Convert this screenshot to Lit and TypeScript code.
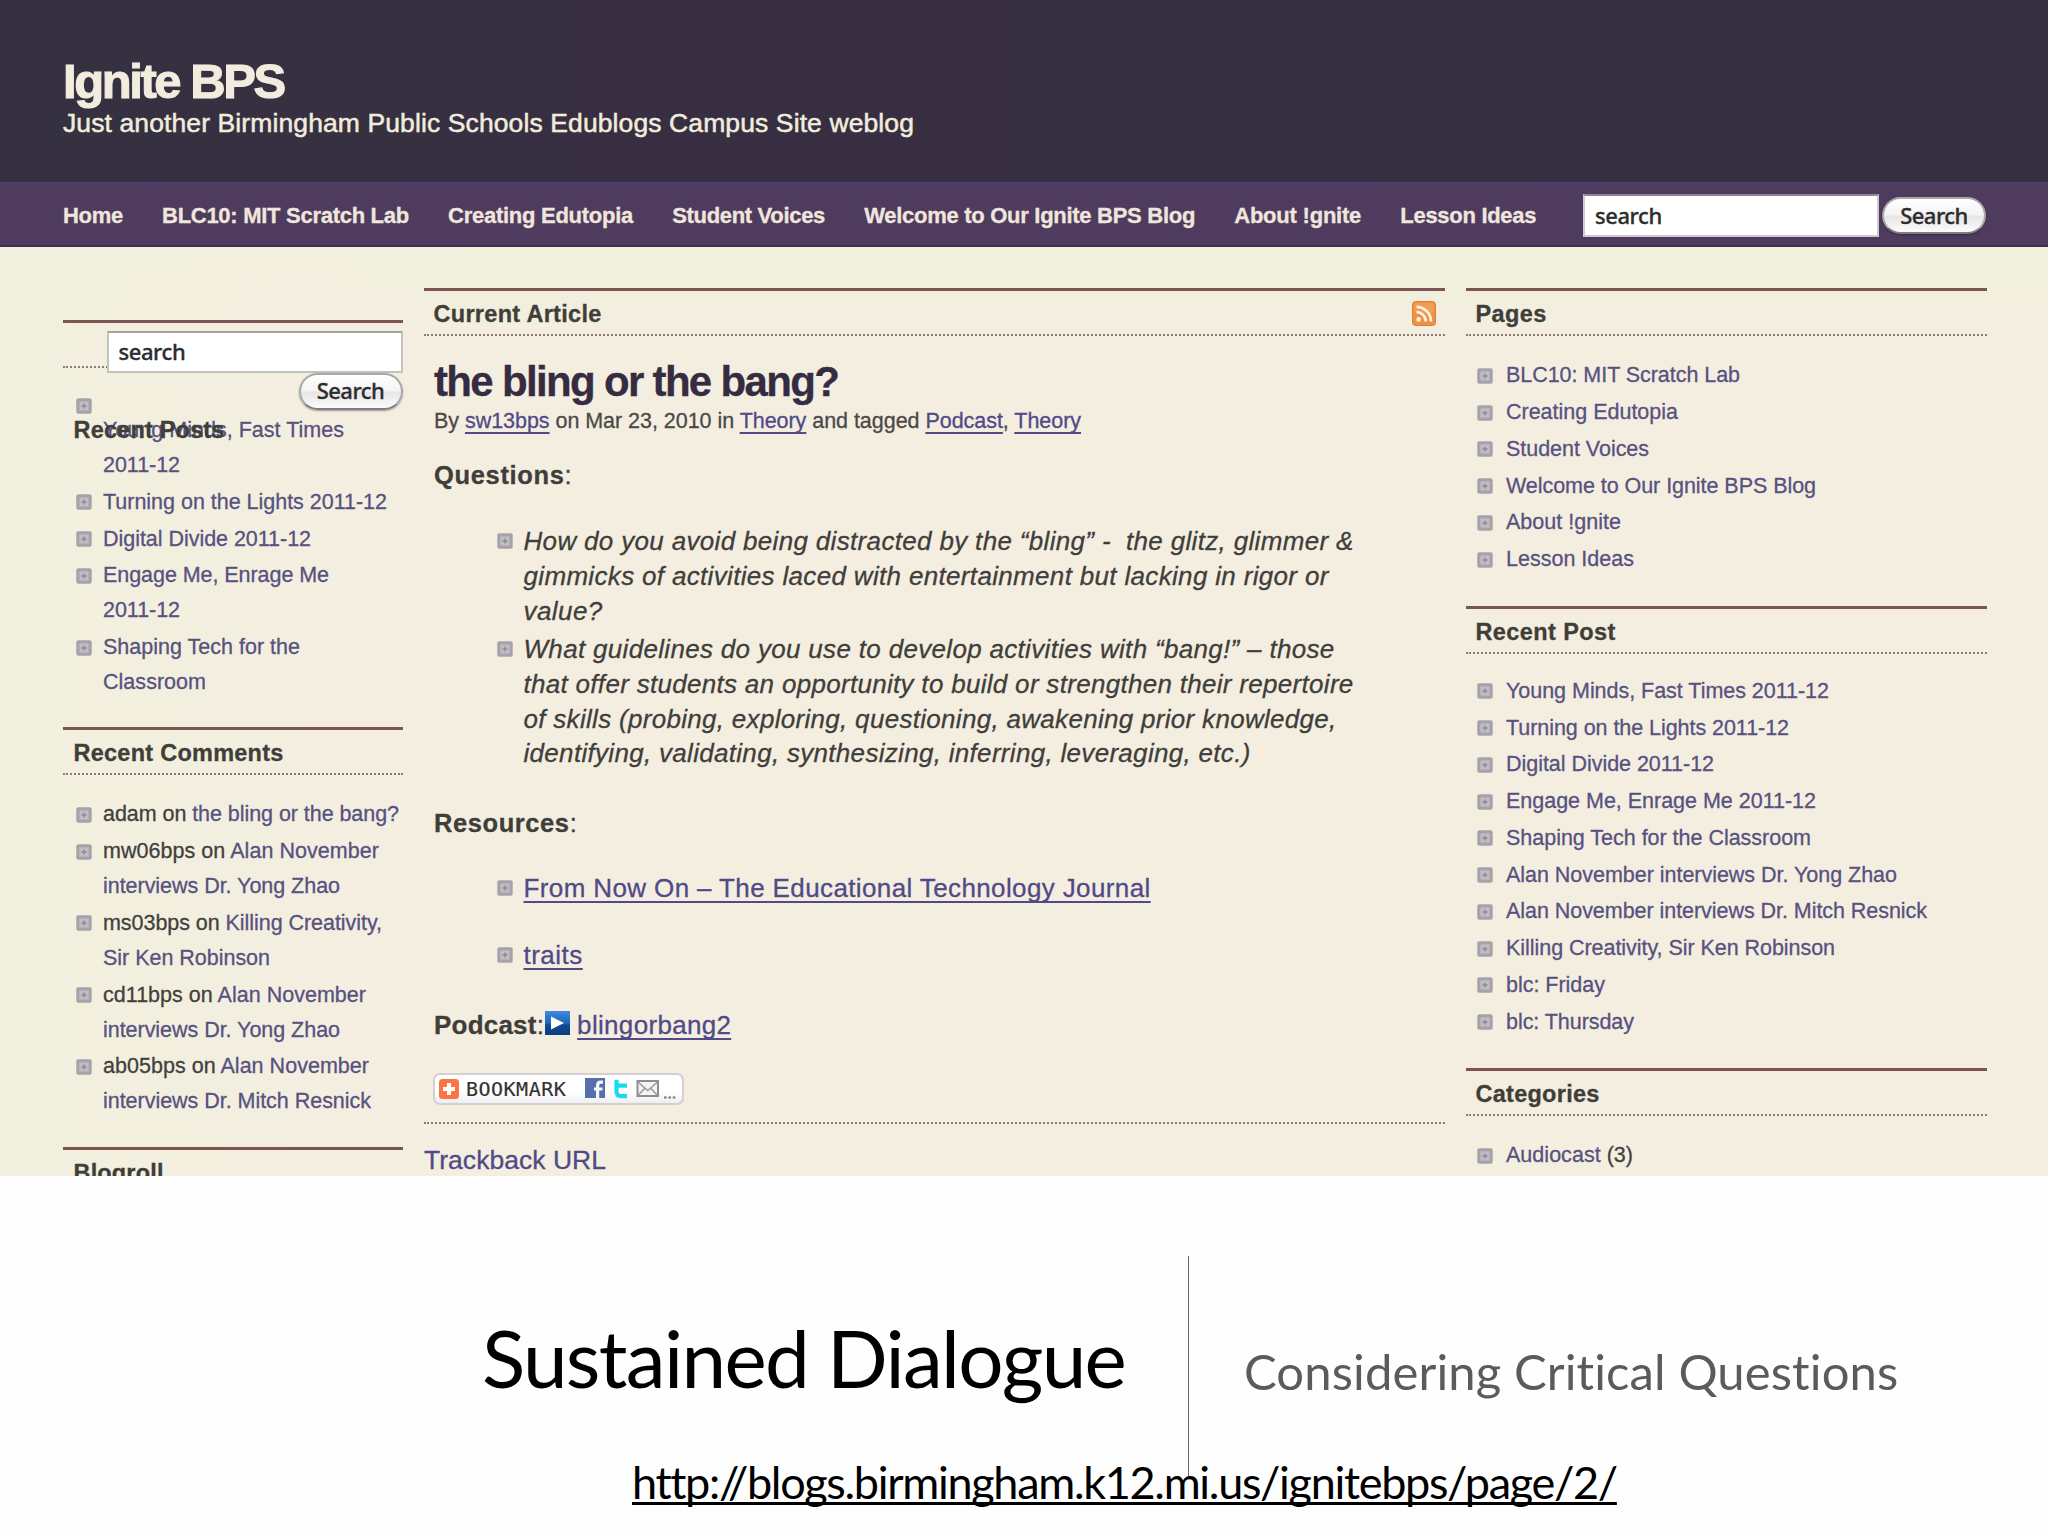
import { LitElement, html, css, svg, nothing } from "lit";
import { customElement, property } from "lit/decorators.js";

/** One line of text whose tracking is adjusted so that it spans a given width. */
@customElement("text-line")
class TextLine extends LitElement {
  @property({ type: Number }) span = 0;

  static styles = css`
    :host { display: block; white-space: nowrap; }
    .ink { display: inline-block; vertical-align: top; line-height: inherit; }
  `;

  firstUpdated() {
    const ink = this.renderRoot.querySelector(".ink") as HTMLElement;
    const count = (this.textContent ?? "").trim().length;
    if (!this.span || count < 2) return;
    const natural = ink.getBoundingClientRect().width;
    const tracking = (this.span + 1 - natural) / (count - 0.5);
    this.style.letterSpacing = `${tracking.toFixed(3)}px`;
  }

  render() {
    return html`<span class="ink"><slot></slot></span>`;
  }
}

@customElement("plus-bullet")
class PlusBullet extends LitElement {
  static styles = css`
    :host { display: block; width: 16px; height: 16px; }
    svg { display: block; }
  `;
  render() {
    return html`<svg width="16" height="16" viewBox="0 0 16 16">
      <rect x="0.3" y="0.3" width="15.4" height="15.4" rx="2" fill="#a5a2aa" />
      <rect x="3.4" y="3.4" width="9.2" height="9.2" fill="#c0bdc4" />
      <path d="M8 5.4v5.2M5.4 8h5.2" stroke="#8f8b98" stroke-width="1.5" />
    </svg>`;
  }
}

/** A run of text on one line: plain prefix, link, plain suffix, and its width. */
type Line = { pre?: string; link?: string; post?: string; w: number };
type Item = Line[];

const l = (link: string, w: number): Line => ({ link, w });

const nav: [string, number][] = [
  ["Home", 59], ["BLC10: MIT Scratch Lab", 246], ["Creating Edutopia", 184],
  ["Student Voices", 152], ["Welcome to Our Ignite BPS Blog", 330],
  ["About !gnite", 126], ["Lesson Ideas", 135],
];

const recentPosts: Item[] = [
  [l("Young Minds, Fast Times", 240), l("2011-12", 76)],
  [l("Turning on the Lights 2011-12", 283)],
  [l("Digital Divide 2011-12", 207)],
  [l("Engage Me, Enrage Me", 225), l("2011-12", 76)],
  [l("Shaping Tech for the", 196), l("Classroom", 102)],
];

const comments: Item[] = [
  [{ pre: "adam on ", link: "the bling or the bang?", w: 295 }],
  [{ pre: "mw06bps on ", link: "Alan November", w: 275 }, l("interviews Dr. Yong Zhao", 236)],
  [{ pre: "ms03bps on ", link: "Killing Creativity,", w: 278 }, l("Sir Ken Robinson", 166)],
  [{ pre: "cd11bps on ", link: "Alan November", w: 262 }, l("interviews Dr. Yong Zhao", 236)],
  [{ pre: "ab05bps on ", link: "Alan November", w: 265 }, l("interviews Dr. Mitch Resnick", 267)],
];

const pages: Item[] = [
  [l("BLC10: MIT Scratch Lab", 233)], [l("Creating Edutopia", 171)],
  [l("Student Voices", 142)], [l("Welcome to Our Ignite BPS Blog", 309)],
  [l("About !gnite", 114)], [l("Lesson Ideas", 127)],
];

const recentPost: Item[] = [
  [l("Young Minds, Fast Times 2011-12", 322)], [l("Turning on the Lights 2011-12", 282)],
  [l("Digital Divide 2011-12", 207)], [l("Engage Me, Enrage Me 2011-12", 309)],
  [l("Shaping Tech for the Classroom", 304)], [l("Alan November interviews Dr. Yong Zhao", 390)],
  [l("Alan November interviews Dr. Mitch Resnick", 420)], [l("Killing Creativity, Sir Ken Robinson", 328)],
  [l("blc: Friday", 98)], [l("blc: Thursday", 127)],
];

const questions: [string, number][][] = [
  [
    ["How do you avoid being distracted by the “bling” - \u00a0the glitz, glimmer &", 829],
    ["gimmicks of activities laced with entertainment but lacking in rigor or", 804],
    ["value?", 78],
  ],
  [
    ["What guidelines do you use to develop activities with “bang!” – those", 810],
    ["that offer students an opportunity to build or strengthen their repertoire", 829],
    ["of skills (probing, exploring, questioning, awakening prior knowledge,", 812],
    ["identifying, validating, synthesizing, inferring, leveraging, etc.)", 726],
  ],
];

const rssIcon = svg`<svg class="rss" width="24" height="25" viewBox="0 0 24 25">
  <rect x="0.5" y="0.5" width="23" height="24" rx="3" fill="#ee9145" stroke="#e07f35" />
  <rect x="2" y="2" width="20" height="10" rx="2" fill="#f4a55c" opacity="0.6" />
  <circle cx="6.6" cy="18.4" r="2.3" fill="#fbf0e2" />
  <path d="M4.5 11.2a9 9 0 0 1 9.2 9.3M4.5 5.8A14.6 14.6 0 0 1 19 20.5" fill="none" stroke="#fbf0e2" stroke-width="2.8" />
</svg>`;

const playIcon = svg`<svg width="25" height="24" viewBox="0 0 25 24">
  <defs><linearGradient id="play" x1="0" y1="0" x2="0" y2="1">
    <stop offset="0" stop-color="#3f8ae0" /><stop offset="0.5" stop-color="#1f65b8" />
    <stop offset="0.6" stop-color="#0c4a94" /><stop offset="1" stop-color="#0a3f80" />
  </linearGradient></defs>
  <rect width="25" height="24" fill="url(#play)" />
  <path d="M6 5.5v13L19 12z" fill="#fff" />
</svg>`;

const bookmarkPlus = svg`<svg width="20" height="20" viewBox="0 0 20 20">
  <rect width="20" height="20" rx="3.5" fill="#fb7446" />
  <path d="M10 4v12M4 10h12" stroke="#fff" stroke-width="4" />
</svg>`;

const bookmarkIcons = svg`<svg width="92" height="24" viewBox="0 0 92 24">
  <rect x="0" y="1" width="20" height="20" fill="#5470ad" />
  <path d="M18 5.2h-2.2q-3.2 0-3.2 3.4V21M9 12h8.5" fill="none" stroke="#f4f6fb" stroke-width="3.2" />
  <path d="M31.5 3v11.5q0 4.6 4.8 4.6H42M31.5 8.6H42" fill="none" stroke="#19dbf0" stroke-width="4.2" />
  <rect x="52.5" y="4" width="20.5" height="15" fill="#f4f4f4" stroke="#8e8e8e" stroke-width="2" />
  <path d="M53 5l9.8 8.5L72.5 5M53 18.5l6.5-7M72.5 18.5l-6.5-7" fill="none" stroke="#999" stroke-width="1.5" />
  <path d="M79 20.5h2.6M83.4 20.5h2.6M87.8 20.5h2.6" stroke="#777" stroke-width="2.2" />
</svg>`;

@customElement("app-root")
class AppRoot extends LitElement {
  static styles = css`
    :host {
      display: block; width: 2048px; height: 1536px; overflow: hidden; background: #fefefe;
      font-family: "Liberation Sans", Arial, sans-serif; color: #42403d;
    }
    * { box-sizing: border-box; }
    ul { list-style: none; margin: 0; padding: 0; }
    .blog {
      height: 1176px; overflow: hidden; -webkit-text-stroke-width: 0.3px;
      background: linear-gradient(90deg, #f2f0de 0, rgba(243, 239, 224, 0.6) 300px, rgba(244, 238, 225, 0) 520px),
        linear-gradient(180deg, #f1f0dd 245px, #f4eee1 350px, #f4eee1 1100px, #f3efe0 1176px);
    }
    .masthead { height: 182px; padding: 54px 63px 0; background: linear-gradient(90deg, #353141, #372f41 30%, #362f40); color: #f2ecdf; }
    .site { font-size: 49px; line-height: 54px; font-weight: 700; -webkit-text-stroke-width: 1.1px; }
    .tagline { font-size: 26.5px; line-height: 30px; -webkit-text-stroke-width: 0.5px; }
    .navbar {
      height: 65px; border-top: 3px solid #494070; border-bottom: 2px solid #412d52; background: #4f3b5e;
      display: flex; align-items: center; justify-content: space-between; padding: 1px 62px 0 63px;
    }
    .nav { display: flex; gap: 39.2px; font-size: 22px; line-height: 30px; font-weight: 700; color: #efe6dd; }
    .find { display: flex; align-items: center; gap: 3px; font-family: "Noto Sans", "Open Sans", sans-serif; font-size: 22px; font-weight: 500; color: #2d2d2d; }
    .field { width: 296px; height: 43px; background: #fff; border: 2px solid #cfcad2; border-top-color: #8d8598; padding: 0 10px; line-height: 39px; }
    .btn {
      width: 104px; height: 37px; border-radius: 19px; display: flex; justify-content: center; line-height: 33px;
      background: linear-gradient(#fff, #f4f4f4 48%, #e6e6e8 52%, #fbfbfb); border: 2px solid #aaa7ab; border-bottom-color: #7f7c80; box-shadow: 0 1px 2px rgba(0, 0, 0, 0.35);
    }
    .columns { display: grid; grid-template-columns: 340px 1021px 521px; column-gap: 21px; padding: 41px 61px 0 63px; align-items: start; }
    .left { padding-top: 31.5px; }
    .panel { position: relative; border-top: 3px solid #7d5550; }
    .panel-head {
      height: 45px; border-bottom: 2px dotted #8e7a70; padding: 0 9.5px; display: flex; justify-content: space-between;
      font-size: 23.5px; line-height: 46px; font-weight: 700; color: #3f3e39;
    }
    .left .panel-head { padding-left: 10.5px; }
    .rss { margin-top: 10px; }
    .list { padding: 22px 0 25.5px; font-size: 21.5px; line-height: 35px; }
    .list.wide { padding: 22.3px 0 26.8px; }
    .list.tight { padding-top: 20.3px; }
    .list.pushed { padding-top: 45.5px; }
    .item { display: flex; gap: 13.5px; padding-left: 10.5px; margin-bottom: 1.75px; }
    .left .item { gap: 11px; padding-left: 13px; }
    .item plus-bullet { margin-top: 9.5px; }
    .raised plus-bullet { margin-top: -15px; }
    .link { color: #57527f; }
    .quick { position: absolute; top: 8px; right: 0.5px; display: flex; flex-direction: column; align-items: flex-end; gap: 0; }
    .quick .field { height: 42px; border-color: #c4c2bd; border-top-color: #a5a39f; line-height: 37px; }
    .quick .btn { line-height: 31px; }
    .overlap { position: absolute; left: 10.5px; top: 85px; font-size: 23.5px; line-height: 45px; font-weight: 700; color: #3f3e39; }
    .article { padding-left: 10px; font-size: 26px; line-height: 34.8px; color: #3f3e3a; }
    .title { margin-top: 22px; font-size: 42px; line-height: 48px; font-weight: 700; color: #352c42; }
    .byline { font-size: 21.5px; line-height: 30px; color: #4b4947; }
    .u { color: #504a86; text-decoration: underline; text-decoration-thickness: 2px; text-underline-offset: 4px; text-decoration-skip-ink: none; }
    .q { margin-top: 22px; font-size: 25.5px; }
    .questions { margin-top: 31.2px; font-style: italic; }
    .point { display: flex; gap: 11px; padding-left: 62.5px; margin-bottom: 3.6px; }
    .point plus-bullet { margin-top: 9px; }
    .r { margin-top: 34.5px; font-size: 25.5px; }
    .res1 { margin: 30.2px 0 0; }
    .res2 { margin: 33px 0 0; }
    .pod { margin-top: 34.5px; display: flex; }
    .pod svg { margin: 3px 7px 0 1px; }
    .bookmark {
      margin: 30px 0 0 -1px; width: 251px; height: 32px; border: 2px solid #d3d0d3; border-radius: 7px;
      background: linear-gradient(#fff 60%, #efeff2); display: flex; align-items: center; padding-left: 4px; color: #333;
    }
    .bookmark text-line { margin-left: 7px; width: 119px; font-family: "DejaVu Sans Mono", monospace; font-size: 20px; line-height: 30px; -webkit-text-stroke-width: 0.2px; }
    .bookmark svg { flex: none; }
    .rule { margin-top: 17.5px; border-top: 2px dotted #8e7a70; }
    .trackback { margin-top: 18px; font-size: 26.5px; line-height: 36px; color: #504a86; }
    .caption { height: 360px; padding-top: 80px; font-family: Lato, "Gill Sans", sans-serif; }
    .captions { display: flex; height: 220px; padding-left: 482px; }
    .headline { width: 706px; font-size: 80px; line-height: 96px; padding-top: 53px; color: #000; }
    .sub { border-left: 1px solid #6c6c6c; padding: 84px 0 0 55px; font-size: 49px; line-height: 62px; color: #5b5a5e; }
    .url { position: relative; margin: -22.5px 0 0 632px; font-size: 45px; line-height: 56px; color: #000; }
    .url-text { text-decoration: underline; text-decoration-thickness: 3px; text-underline-offset: 3px; text-decoration-skip-ink: none; }
  `;

  private list(items: Item[], kind = "", firstRaised = false) {
    return html`<ul class="list ${kind}">
      ${items.map((lines, i) => html`<li class="item ${firstRaised && i === 0 ? "raised" : ""}">
        <plus-bullet></plus-bullet>
        <div>${lines.map((x) => html`<text-line .span=${x.w}>${x.pre ?? nothing}<span class="link">${x.link}</span>${x.post ?? nothing}</text-line>`)}</div>
      </li>`)}
    </ul>`;
  }

  private head(text: string, w: number, extra: unknown = nothing) {
    return html`<div class="panel-head"><text-line .span=${w}>${text}</text-line>${extra}</div>`;
  }

  private search() {
    return html`<div class="field"><text-line .span=${66}>search</text-line></div>
      <div class="btn"><text-line .span=${67}>Search</text-line></div>`;
  }

  render() {
    return html`
      <div class="blog">
        <header class="masthead">
          <text-line class="site" .span=${221}>Ignite BPS</text-line>
          <text-line class="tagline" .span=${850}>Just another Birmingham Public Schools Edublogs Campus Site weblog</text-line>
        </header>
        <div class="navbar">
          <nav class="nav">${nav.map(([t, w]) => html`<text-line .span=${w}>${t}</text-line>`)}</nav>
          <div class="find">${this.search()}</div>
        </div>
        <div class="columns">
          <aside class="left">
            <section class="panel">
              <div class="panel-head"></div>
              ${this.list(recentPosts, "pushed", true)}
              <text-line class="overlap" .span=${150}>Recent Posts</text-line>
              <div class="find quick">${this.search()}</div>
            </section>
            <section class="panel">${this.head("Recent Comments", 209)}${this.list(comments)}</section>
            <section class="panel">${this.head("Blogroll", 89)}</section>
          </aside>
          <main>
            <section class="panel">${this.head("Current Article", 167, rssIcon)}</section>
            <article class="article">
              <text-line class="title" .span=${404}>the bling or the bang?</text-line>
              <text-line class="byline" .span=${646}>By <span class="u">sw13bps</span> on Mar 23, 2010 in <span class="u">Theory</span> and tagged <span class="u">Podcast</span>, <span class="u">Theory</span></text-line>
              <text-line class="q" .span=${137}><b>Questions</b>:</text-line>
              <ul class="questions">
                ${questions.map((lines) => html`<li class="point"><plus-bullet></plus-bullet>
                  <div>${lines.map(([t, w]) => html`<text-line .span=${w}>${t}</text-line>`)}</div></li>`)}
              </ul>
              <text-line class="r" .span=${142}><b>Resources</b>:</text-line>
              <div class="point res1"><plus-bullet></plus-bullet><text-line .span=${626}><span class="u">From Now On – The Educational Technology Journal</span></text-line></div>
              <div class="point res2"><plus-bullet></plus-bullet><text-line .span=${58}><span class="u">traits</span></text-line></div>
              <div class="pod"><text-line .span=${109}><b>Podcast</b>:</text-line>${playIcon}<text-line .span=${153}><span class="u">blingorbang2</span></text-line></div>
              <div class="bookmark">${bookmarkPlus}<text-line .span=${99}>BOOKMARK</text-line>${bookmarkIcons}</div>
            </article>
            <div class="rule"></div>
            <text-line class="trackback" .span=${181}>Trackback URL</text-line>
          </main>
          <aside>
            <section class="panel">${this.head("Pages", 70)}${this.list(pages, "wide")}</section>
            <section class="panel">${this.head("Recent Post", 139)}${this.list(recentPost, "wide tight")}</section>
            <section class="panel">${this.head("Categories", 123)}${this.list([[{ link: "Audiocast", post: " (3)", w: 126 }]], "wide")}</section>
          </aside>
        </div>
      </div>
      <footer class="caption">
        <div class="captions">
          <text-line class="headline" .span=${643}>Sustained Dialogue</text-line>
          <text-line class="sub" .span=${655}>Considering Critical Questions</text-line>
        </div>
        <text-line class="url" .span=${983}><span class="url-text">http://blogs.birmingham.k12.mi.us/ignitebps/page/2/</span></text-line>
      </footer>
    `;
  }
}
